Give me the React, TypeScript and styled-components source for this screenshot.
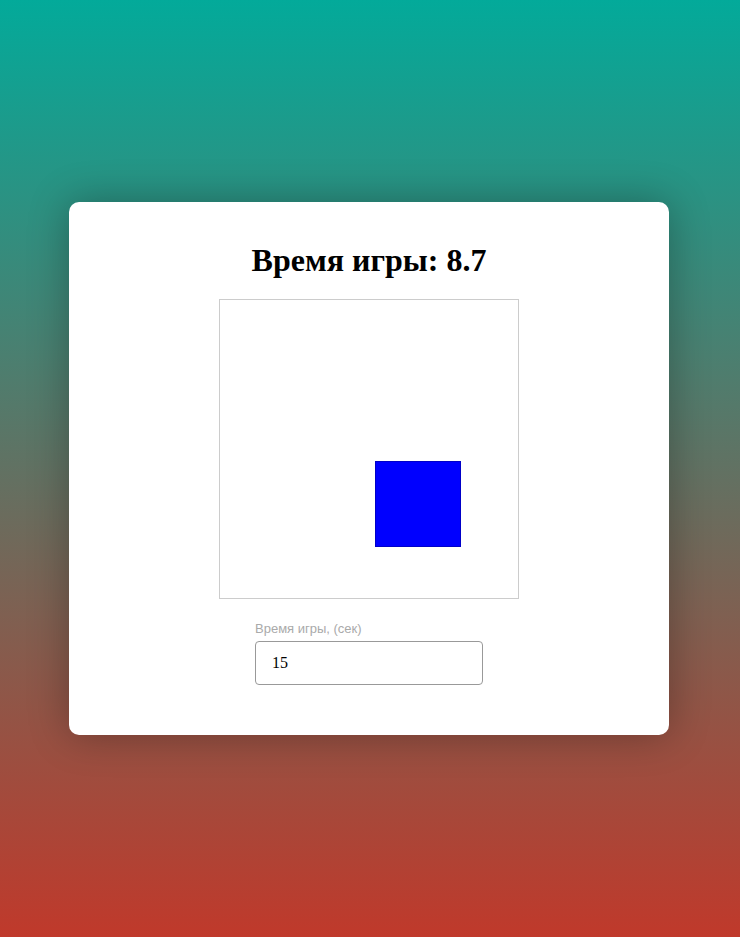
import React, { useState } from 'react';
import styled, { createGlobalStyle } from 'styled-components';

const GlobalStyle = createGlobalStyle`
  html, body {
    margin: 0;
    padding: 0;
  }
  body {
    font-family: "Liberation Serif", "Times New Roman", serif;
  }
`;

const colors = {
    teal: "#03aa9a",
    red: "#c0392b",
    border: "#cccccc",
    label: "#aaaaaa",
    inputBorder: "#999999",
    square: "#0000ff"
};

function App() {
    const [duration, setDuration] = useState('15');
    const time = 8.7;

    return (
        <>
            <GlobalStyle />
            <Page>
                <Card>
                    <Title>Время игры: {time}</Title>
                    <Field>
                        <Square style={{ left: 155, top: 161 }} />
                    </Field>
                    <Settings>
                        <Label htmlFor="duration">Время игры, (сек)</Label>
                        <Input
                            id="duration"
                            value={duration}
                            onChange={(e) => setDuration(e.target.value)}
                        />
                    </Settings>
                </Card>
            </Page>
        </>
    );
}

export default App;

const Page = styled.div`
    display: flex;
    align-items: center;
    justify-content: center;
    box-sizing: border-box;
    width: 100%;
    min-height: 100vh;
    padding-right: 2px;
    background: linear-gradient(to bottom, ${colors.teal}, ${colors.red});
`;

const Card = styled.div`
    display: flex;
    flex-direction: column;
    align-items: center;
    box-sizing: border-box;
    width: 600px;
    height: 533px;
    padding-top: 40px;
    background: #fff;
    border-radius: 10px;
    box-shadow: 0 0 40px rgba(0, 0, 0, 0.3);
`;

const Title = styled.h1`
    margin: 0 0 20px;
    font-size: 32px;
    font-weight: bold;
    line-height: 37px;
    color: #000;
`;

const Field = styled.div`
    position: relative;
    box-sizing: border-box;
    width: 300px;
    height: 300px;
    border: 1px solid ${colors.border};
`;

const Square = styled.div`
    position: absolute;
    box-sizing: border-box;
    width: 86px;
    height: 86px;
    background: ${colors.square};
    border: 1px solid #0000c8;
`;

const Settings = styled.div`
    display: flex;
    flex-direction: column;
    width: 228px;
    margin-top: 22px;
`;

const Label = styled.label`
    margin-bottom: 5px;
    font-family: "Liberation Sans", Arial, sans-serif;
    font-size: 13px;
    line-height: 15px;
    color: ${colors.label};
`;

const Input = styled.input`
    box-sizing: border-box;
    width: 100%;
    height: 44px;
    padding: 0 16px;
    border: 1px solid ${colors.inputBorder};
    border-radius: 4px;
    font-family: "Liberation Serif", "Times New Roman", serif;
    font-size: 16px;
    color: #000;
    outline: none;
`;
